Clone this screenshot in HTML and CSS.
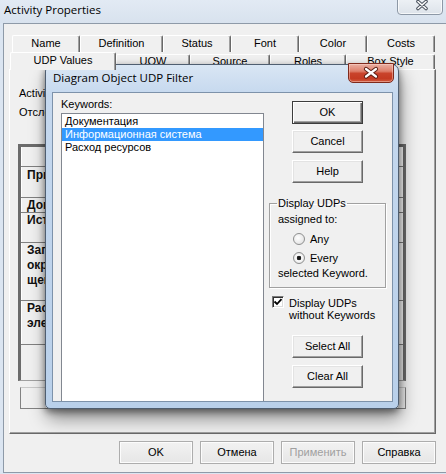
FILE: index.html
```html
<!DOCTYPE html>
<html>
<head>
<meta charset="utf-8">
<title>Activity Properties</title>
<link rel="stylesheet" href="styles.css">
</head>
<body>
<div class="window">
  <div class="titlebar">
    <span class="title">Activity Properties</span>
    <div class="win-close">
      <svg width="44" height="20" viewBox="0 0 44 20">
        <path d="M20 7.5 L28 14.5 M28 7.5 L20 14.5" stroke="#4b535e" stroke-width="3.6" stroke-linecap="round"/>
        <path d="M20 7.5 L28 14.5 M28 7.5 L20 14.5" stroke="#ffffff" stroke-width="1.6" stroke-linecap="round"/>
      </svg>
    </div>
  </div>
  <div class="client">
    <div class="tabctl">
      <div class="tabrow back">
        <div class="tab">Name</div>
        <div class="tab">Definition</div>
        <div class="tab">Status</div>
        <div class="tab">Font</div>
        <div class="tab">Color</div>
        <div class="tab">Costs</div>
      </div>
      <div class="tabrow front">
        <div class="tab sel">UDP Values</div>
        <div class="tab">UOW</div>
        <div class="tab">Source</div>
        <div class="tab">Roles</div>
        <div class="tab">Box Style</div>
      </div>
      <div class="page">
        <div class="pline">Activity</div>
        <div class="pline second">Отслеж.</div>
        <div class="grid">
          <div class="row hdr"><div class="c1"></div><div class="c2"></div></div>
          <div class="row r1"><div class="c1">При</div><div class="c2"></div></div>
          <div class="row r2"><div class="c1">Доп</div><div class="c2"></div></div>
          <div class="row r3"><div class="c1">Ист</div><div class="c2"></div></div>
          <div class="row r4"><div class="c1">Заг<br>окр<br>щей</div><div class="c2"></div></div>
          <div class="row r5"><div class="c1">Рас<br>эле</div><div class="c2"></div></div>
        </div>
        <div class="field"></div>
      </div>
    </div>
    <div class="btnrow">
      <div class="wbtn">OK</div>
      <div class="wbtn">Отмена</div>
      <div class="wbtn disabled">Применить</div>
      <div class="wbtn">Справка</div>
    </div>
  </div>
</div>

<div class="dialog">
  <div class="dlg-title">
    <span>Diagram Object UDP Filter</span>
    <div class="red-close">
      <svg width="44" height="18" viewBox="0 0 44 18">
        <path d="M17 5 L27 12.5 M27 5 L17 12.5" stroke="#5c1f14" stroke-width="4.2" stroke-linecap="round"/>
        <path d="M17 5 L27 12.5 M27 5 L17 12.5" stroke="#ffffff" stroke-width="2.2" stroke-linecap="round"/>
      </svg>
    </div>
  </div>
  <div class="dlg-client">
    <div class="kw-col">
      <div class="lbl">Keywords:</div>
      <div class="listbox">
        <div class="item">Документация</div>
        <div class="item selected">Информационная система</div>
        <div class="item">Расход ресурсов</div>
      </div>
    </div>
    <div class="opt-col">
      <div class="dbtn default">OK</div>
      <div class="dbtn b-cancel">Cancel</div>
      <div class="dbtn b-help">Help</div>
      <fieldset class="group">
        <legend>Display UDPs</legend>
        <div class="gline">assigned to:</div>
        <div class="radio-row first"><span class="radio"></span><span>Any</span></div>
        <div class="radio-row"><span class="radio on"></span><span>Every</span></div>
        <div class="gline">selected Keyword.</div>
      </fieldset>
      <div class="check-row">
        <span class="checkbox">
          <svg width="10" height="10" viewBox="0 0 10 10"><path d="M1.5 4.5 L4 7 L8.5 2.2" stroke="#000" stroke-width="1.8" fill="none"/></svg>
        </span>
        <span class="check-text">Display UDPs<br>without Keywords</span>
      </div>
      <div class="dbtn b-sel">Select All</div>
      <div class="dbtn b-clr">Clear All</div>
    </div>
  </div>
</div>
</body>
</html>
```
FILE: styles.css
```css
* { box-sizing: border-box; }
html, body { margin: 0; padding: 0; }
body {
  width: 446px;
  height: 474px;
  overflow: hidden;
  position: relative;
  background: #dbe5f1;
  font-family: "Liberation Sans", Arial, sans-serif;
  font-size: 11px;
  color: #000;
}

/* outer window */
.titlebar {
  height: 23px;
  display: flex;
  align-items: flex-start;
  background: linear-gradient(#e2eaf4, #d8e2ee);
}
.titlebar .title {
  font-family: "Open Sans", "Liberation Sans", sans-serif;
  font-size: 11.5px;
  line-height: 14px;
  margin: 3px 0 0 4px;
}
.win-close {
  margin-left: auto;
  margin-right: 3px;
  margin-top: -7px;
  width: 46px;
  height: 22px;
  border: 1px solid #8d98a6;
  border-radius: 0 0 4px 4px;
  background: linear-gradient(#f3f6f9, #dde3ea);
  box-shadow: inset 0 0 0 1px rgba(255,255,255,0.7);
}
.win-close svg { display: block; }

.client {
  margin-left: 3px;
  width: 460px;
  height: 450px;
  border: 1px solid #8e9aa8;
  border-right: none;
  background: #f0f0f0;
  padding: 11px 0 0 5px;
}
.tabctl { width: 427px; }
.tabrow { display: flex; height: 17px; }
.back { margin-left: 3px; }
.front { margin-left: 1px; }
.tab {
  height: 17px;
  border-top: 1px solid #fff;
  border-left: 1px solid #fff;
  border-right: 1px solid #696969;
  box-shadow: inset -1px 0 #a0a0a0;
  border-radius: 2px 2px 0 0;
  background: #f0f0f0;
  text-align: center;
  line-height: 15px;
}
.back .tab { width: 68px; }
.back .tab:nth-child(2) { width: 83px; }
.front .tab { height: 15px; margin-top: 2px; line-height: 13px; }
.front .tab:nth-child(1) { width: 106px; }
.front .tab:nth-child(2) { width: 74px; }
.front .tab:nth-child(3) { width: 80px; }
.front .tab:nth-child(4) { width: 76px; }
.front .tab:nth-child(5) { width: 89px; }
.front .tab.sel {
  height: 18px;
  margin-top: 0;
  margin-bottom: -1px;
  line-height: 15px;
  position: relative;
  z-index: 1;
}

.page {
  height: 365px;
  border: 1px solid;
  border-color: #fff #696969 #696969 #fff;
  box-shadow: inset -1px -1px #a0a0a0;
  padding: 17px 0 0 8px;
}
.pline { height: 13px; line-height: 13px; padding-left: 1px; white-space: nowrap; }
.pline.second { margin-top: 6px; }

.grid {
  margin-top: 25px;
  width: 388px;
  height: 237px;
  border: 3px solid #6b6b6b;
  border-bottom: 1px solid #a0a0a0;
}
.row {
  display: flex;
  border-bottom: 1px solid #808080;
  overflow: hidden;
}
.row.hdr { height: 20px; }
.row.r1 { height: 31px; }
.row.r2 { height: 15px; }
.row.r3 { height: 30px; }
.row.r4 { height: 58px; }
.row.r5 { height: 44px; }
.c1 {
  width: 150px;
  border-left: 1px solid #fff;
  border-right: 1px solid #808080;
  padding: 0 0 0 5px;
  font-weight: bold;
  font-size: 12px;
  line-height: 15px;
  color: #111;
}
.r1 .c1 { padding-top: 1px; }
.c2 { flex: 1; background: #fff; }
.field {
  margin: 6px 0 0 2px;
  width: 386px;
  height: 22px;
  border: 1px solid #828282;
  border-top-color: #c8c8c8;
  background: #f0f0f0;
}

.btnrow {
  width: 427px;
  margin-top: 7px;
  display: flex;
  justify-content: flex-end;
  gap: 7px;
}
.wbtn {
  width: 74px;
  height: 23px;
  border: 1px solid #adadad;
  background: linear-gradient(#f2f2f2, #e6e6e6);
  box-shadow: inset 0 0 0 1px #fcfcfc;
  text-align: center;
  line-height: 21px;
}
.wbtn.disabled { color: #a0a0a0; }

/* dialog */
.dialog {
  position: absolute;
  left: 45px;
  top: 64px;
  width: 354px;
  height: 345px;
  border: 1px solid #4f5e70;
  border-radius: 7px 7px 5px 5px;
  background: linear-gradient(#d9e6f4, #c5d8ee 30px, #b9d0ea);
  box-shadow: 0 3px 7px rgba(0,0,0,0.45), 2px 10px 18px rgba(0,0,0,0.4);
  padding: 0 5px 6px 6px;
  display: flex;
  flex-direction: column;
}
.dlg-title {
  height: 27px;
  display: flex;
  align-items: flex-start;
}
.dlg-title span {
  margin: 6px 0 0 1px;
  font-family: "Open Sans", "Liberation Sans", sans-serif;
  font-size: 11.5px;
  line-height: 14px;
}
.red-close {
  margin-left: auto;
  margin-right: -1px;
  margin-top: -2px;
  width: 46px;
  height: 20px;
  border: 1px solid #7f2a1c;
  border-radius: 0 0 5px 5px;
  background: linear-gradient(#eab0a3 0%, #de7f6b 40%, #c9432b 52%, #c43a22 80%, #d05a3e 100%);
  box-shadow: inset 0 0 0 1px rgba(255,220,210,0.45);
}
.red-close svg { display: block; }

.dlg-client {
  flex: 1;
  border: 1px solid #7d92aa;
  background: #f0f0f0;
  display: flex;
  overflow: hidden;
}
.kw-col { width: 211px; flex: none; padding: 5px 0 0 8px; }
.lbl { height: 13px; line-height: 13px; }
.listbox {
  margin-top: 2px;
  width: 203px;
  height: 400px;
  border: 1px solid #828790;
  background: #fff;
  padding-top: 1px;
}
.item { height: 13px; line-height: 13px; padding-left: 3px; white-space: nowrap; }
.item.selected { background: #3399ff; color: #fff; }

.opt-col {
  margin-left: 5px;
  width: 117px;
  flex: none;
  padding-top: 8px;
  display: flex;
  flex-direction: column;
}
.dbtn {
  width: 71px;
  height: 23px;
  margin-left: 23px;
  flex: none;
  border: 1px solid;
  border-color: #ffffff #696969 #696969 #ffffff;
  box-shadow: inset -1px -1px #a0a0a0, inset 1px 1px #e3e3e3;
  background: #f0f0f0;
  text-align: center;
  line-height: 21px;
}
.dbtn.default {
  border: 1px solid #3c3c3c;
  box-shadow: inset 1px 1px #fff, inset -1px -1px #696969, inset -2px -2px #a0a0a0;
}
.b-cancel { margin-top: 6px; }
.b-help { margin-top: 7px; }
.b-sel { margin-top: 14px; }
.b-clr { margin-top: 7px; }

.group {
  margin: 14px 0 0 0;
  padding: 3px 0 7px 8px;
  width: 117px;
  min-width: 0;
  border: 1px solid #a0a0a0;
  box-shadow: inset 1px 1px #fff, 1px 1px #fff;
}
.group legend {
  padding: 0 1px;
  margin-left: -1px;
  line-height: 13px;
}
.gline { height: 13px; line-height: 13px; white-space: nowrap; }
.radio-row {
  height: 19px;
  display: flex;
  align-items: center;
  gap: 5px;
}
.radio-row.first { margin-top: 3px; }
.radio {
  margin-left: 15px;
  width: 12px;
  height: 12px;
  border-radius: 50%;
  border: 1px solid #8e8f8f;
  background: radial-gradient(circle at 40% 40%, #ffffff, #e6e6e6 70%, #d0d0d0);
}
.radio.on {
  background: radial-gradient(circle, #111 0, #222 2px, #ffffff 2.6px, #e8e8e8 70%, #d0d0d0);
}

.check-row {
  margin-top: 9px;
  display: flex;
  align-items: flex-start;
  gap: 5px;
}
.checkbox {
  margin-left: 3px;
  margin-top: -1px;
  width: 12px;
  height: 12px;
  flex: none;
  border: 1px solid;
  border-color: #7a7a7a #ffffff #ffffff #7a7a7a;
  box-shadow: inset 1px 1px #303030, inset -1px -1px #dcdcdc;
  background: #fff;
  display: flex;
  align-items: center;
  justify-content: center;
}
.checkbox svg { display: block; }
.check-text { line-height: 12px; white-space: nowrap; }
```
